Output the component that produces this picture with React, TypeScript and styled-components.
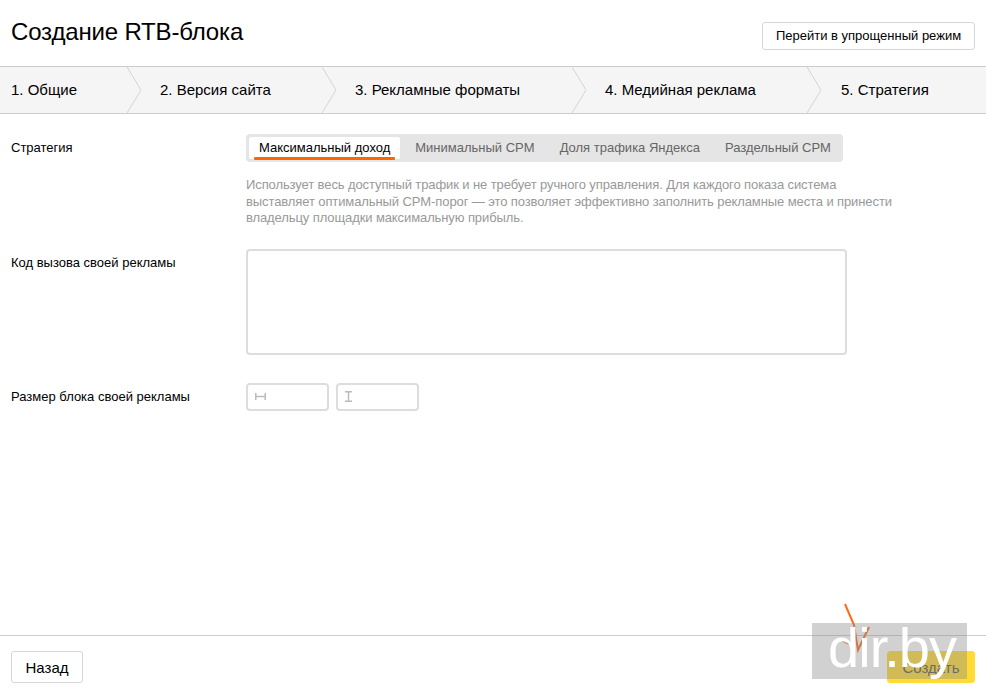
import React from 'react'
import styled, { createGlobalStyle } from 'styled-components'

const GlobalStyle = createGlobalStyle`
  html, body {
    margin: 0;
    padding: 0;
    background: #fff;
    font-family: 'Liberation Sans', Arial, sans-serif;
    color: #000;
  }
`

const Page = styled.div`
  position: relative;
  width: 986px;
  height: 692px;
  display: flex;
  flex-direction: column;
  overflow: hidden;
`

const Header = styled.header`
  height: 66px;
  flex: none;
  display: flex;
  justify-content: space-between;
  align-items: flex-start;
  padding: 0 11px;
`

const Title = styled.h1`
  margin: 17px 0 0;
  font-size: 24px;
  line-height: 29px;
  font-weight: 400;
  letter-spacing: -0.17px;
`

const Button = styled.button<{ $primary?: boolean }>`
  height: 32px;
  padding: 0;
  border: 1px solid ${(props) => (props.$primary ? '#ffdb33' : '#d6d6d6')};
  border-radius: 3px;
  background: ${(props) => (props.$primary ? '#ffdb33' : '#fff')};
  font-family: inherit;
  font-size: 15px;
  color: ${(props) => (props.$primary ? '#555' : '#000')};
`

const ModeButton = styled(Button)`
  width: 213px;
  height: 28px;
  margin-top: 22px;
  padding-bottom: 2px;
  font-size: 13px;
`

const Steps = styled.nav`
  height: 46px;
  flex: none;
  display: flex;
  border-top: 1px solid #ccc;
  border-bottom: 1px solid #ccc;
  background: #f5f5f5;
`

const Step = styled.div<{ $width?: number }>`
  position: relative;
  box-sizing: border-box;
  width: ${(props) => (props.$width ? `${props.$width}px` : 'auto')};
  display: flex;
  align-items: center;
  padding: 0 0 2px 19px;
  font-size: 15px;
  white-space: nowrap;
  &:first-child {
    padding-left: 11px;
  }
  &:last-child {
    padding-left: 20px;
  }
`

const Chevron = styled.svg`
  position: absolute;
  top: 0;
  right: 0;
  width: 14px;
  height: 46px;
`

const Form = styled.main`
  flex: 1;
  display: flex;
  flex-direction: column;
  padding: 20px 0 0 11px;
`

const Row = styled.div<{ $gap?: number }>`
  display: grid;
  grid-template-columns: 235px 1fr;
  margin-bottom: ${(props) => props.$gap ?? 0}px;
`

const Label = styled.div<{ $top: number }>`
  padding-top: ${(props) => props.$top}px;
  font-size: 13px;
  line-height: 15px;
`

const TabBar = styled.div`
  display: inline-flex;
  gap: 5px;
  height: 28px;
  width: 597px;
  box-sizing: border-box;
  padding: 3px;
  border-radius: 4px;
  background: #e5e5e5;
`

const Tab = styled.div<{ $active?: boolean }>`
  position: relative;
  height: 22px;
  padding: 0 10px;
  border-radius: 2px;
  font-size: 13px;
  line-height: 21px;
  white-space: nowrap;
  color: ${(props) => (props.$active ? '#000' : '#666')};
  background: ${(props) => (props.$active ? '#fff' : 'transparent')};
  ${(props) =>
    props.$active &&
    `
    &::after {
      content: '';
      position: absolute;
      left: 5px;
      right: 5px;
      bottom: -1px;
      height: 3px;
      border-radius: 1px;
      background: #ff6600;
    }
  `}
`

const Hint = styled.p`
  width: 660px;
  margin: 15px 0 0;
  font-size: 13px;
  line-height: 16.5px;
  letter-spacing: -0.1px;
  color: #999;
`

const CodeArea = styled.div`
  width: 601px;
  height: 106px;
  box-sizing: border-box;
  border: 2px solid #ddd;
  border-radius: 4px;
  background: #fff;
`

const SizeFields = styled.div`
  display: flex;
  gap: 7px;
`

const SizeField = styled.div`
  width: 83px;
  height: 28px;
  box-sizing: border-box;
  display: flex;
  align-items: center;
  padding-left: 7px;
  border: 2px solid #ddd;
  border-radius: 4px;
  color: #bbb;
`

const Footer = styled.footer`
  height: 57px;
  box-sizing: border-box;
  flex: none;
  display: flex;
  justify-content: space-between;
  align-items: flex-start;
  padding: 15px 11px 0;
  border-top: 1px solid #ccc;
`

const BackButton = styled(Button)`
  width: 72px;
`

const CreateButton = styled(Button)`
  width: 88px;
`

const Watermark = styled.div`
  position: absolute;
  left: 812px;
  top: 623px;
  width: 155px;
  height: 56px;
  box-sizing: border-box;
  display: flex;
  justify-content: center;
  padding-left: 5px;
  background: rgba(140, 140, 140, 0.4);
  color: #fff;
  font-size: 56px;
  line-height: 49px;
  letter-spacing: -1px;
  white-space: nowrap;
`

const Cursor = styled.svg`
  position: absolute;
  left: 838px;
  top: 600px;
  width: 40px;
  height: 62px;
`

const stepTitles: [string, number?][] = [
  ['1. Общие', 141],
  ['2. Версия сайта', 195],
  ['3. Рекламные форматы', 250],
  ['4. Медийная реклама', 235],
  ['5. Стратегия'],
]

const tabs = ['Максимальный доход', 'Минимальный CPM', 'Доля трафика Яндекса', 'Раздельный CPM']

const App = () => (
  <Page>
    <GlobalStyle />
    <Header>
      <Title>Создание RTB-блока</Title>
      <ModeButton>Перейти в упрощенный режим</ModeButton>
    </Header>
    <Steps>
      {stepTitles.map(([title, width]) => (
        <Step key={title} $width={width}>
          {title}
          {width && (
            <Chevron viewBox='0 0 14 46' fill='none'>
              <path d='M0 0L14 23L0 46' stroke='#d4d4d4' />
            </Chevron>
          )}
        </Step>
      ))}
    </Steps>
    <Form>
      <Row $gap={22}>
        <Label $top={6}>Стратегия</Label>
        <div>
          <TabBar>
            {tabs.map((tab, i) => (
              <Tab key={tab} $active={i === 0}>
                {tab}
              </Tab>
            ))}
          </TabBar>
          <Hint>
            Использует весь доступный трафик и не требует ручного управления. Для каждого показа система
            выставляет оптимальный CPM-порог — это позволяет эффективно заполнить рекламные места и принести
            владельцу площадки максимальную прибыль.
          </Hint>
        </div>
      </Row>
      <Row $gap={28}>
        <Label $top={6}>Код вызова своей рекламы</Label>
        <CodeArea />
      </Row>
      <Row>
        <Label $top={6}>Размер блока своей рекламы</Label>
        <SizeFields>
          <SizeField>
            <svg width='11' height='7' viewBox='0 0 11 7' fill='none' stroke='currentColor' strokeWidth='1.5'>
              <path d='M.75 0v7M10.25 0v7M0 3.5h11' />
            </svg>
          </SizeField>
          <SizeField>
            <svg width='7' height='11' viewBox='0 0 7 11' fill='none' stroke='currentColor' strokeWidth='1.5'>
              <path d='M0 .75h7M0 10.25h7M3.5 0v11' />
            </svg>
          </SizeField>
        </SizeFields>
      </Row>
    </Form>
    <Footer>
      <BackButton>Назад</BackButton>
      <CreateButton $primary>Создать</CreateButton>
    </Footer>
    <Cursor viewBox='0 0 40 62' fill='none' stroke='#ff6a13' strokeWidth='2'>
      <path d='M7 4L16 25L20 50L31 27' />
      <path d='M3 40L11 44' opacity='0.6' />
    </Cursor>
    <Watermark>dir.by</Watermark>
  </Page>
)

export default App
